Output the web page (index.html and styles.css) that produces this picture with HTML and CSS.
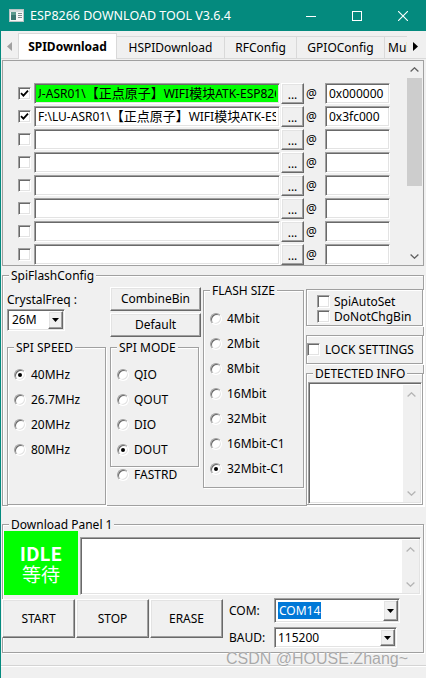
FILE: index.html
```html
<!DOCTYPE html>
<html lang="zh">
<head>
<meta charset="utf-8">
<title>ESP8266 DOWNLOAD TOOL V3.6.4</title>
<link rel="stylesheet" href="styles.css">
</head>
<body>
<div class="win">
  <header class="title">
    <svg class="appicon" width="15" height="13" viewBox="0 0 15 13">
      <rect x="0.5" y="0.5" width="14" height="12" fill="#f6f6f6" stroke="#b8c4c4"/>
      <rect x="1" y="1" width="13" height="2" fill="#d6dcdc"/>
      <rect x="2" y="3" width="5" height="8" fill="#3b7670"/>
      <rect x="2" y="3" width="5" height="3" fill="#5d9a8e"/>
      <rect x="9" y="4" width="4" height="1" fill="#7d8d8d"/>
      <rect x="9" y="6" width="4" height="1" fill="#7d8d8d"/>
      <rect x="9" y="8" width="4" height="1" fill="#7d8d8d"/>
    </svg>
    <span class="ttext">ESP8266 DOWNLOAD TOOL V3.6.4</span>
    <div class="caps">
      <span class="cap"><svg width="10" height="10" viewBox="0 0 10 10"><rect x="0" y="5" width="10" height="1" fill="#fff"/></svg></span>
      <span class="cap"><svg width="10" height="10" viewBox="0 0 10 10"><rect x="0.5" y="0.5" width="9" height="9" fill="none" stroke="#fff"/></svg></span>
      <span class="cap"><svg width="10" height="10" viewBox="0 0 10 10"><path d="M0 0L10 10M10 0L0 10" stroke="#fff" stroke-width="1.1"/></svg></span>
    </div>
  </header>

  <nav class="tabs">
    <span class="tarr"><svg width="5" height="9" viewBox="0 0 5 9"><path d="M5 0L0 4.5L5 9Z" fill="#a0a0a0"/></svg></span>
    <span class="tab sel t1">SPIDownload</span>
    <span class="tab t2">HSPIDownload</span>
    <span class="tab t3">RFConfig</span>
    <span class="tab t4">GPIOConfig</span>
    <span class="tab t5"><span>MultiDownload</span></span>
    <span class="tarr r"><svg width="5" height="9" viewBox="0 0 5 9"><path d="M0 0L5 4.5L0 9Z" fill="#000"/></svg></span>
  </nav>

  <section class="list">
    <div class="rows">
      <div class="row">
        <span class="ck on"><svg width="9" height="9" viewBox="0 0 9 9"><path d="M1 4.2L3.4 6.6L8 1.6" fill="none" stroke="#000" stroke-width="1.8"/></svg></span>
        <span class="tb path green"><span class="tbi"><span class="scrolled">F:\LU-ASR01\<span class="cjk">【正点原子】</span>WIFI<span class="cjk">模块</span>ATK-ESP8266</span></span></span>
        <span class="btn dots">...</span>
        <span class="at">@</span>
        <span class="tb addr"><span class="tbi">0x000000</span></span>
      </div>
      <div class="row">
        <span class="ck on"><svg width="9" height="9" viewBox="0 0 9 9"><path d="M1 4.2L3.4 6.6L8 1.6" fill="none" stroke="#000" stroke-width="1.8"/></svg></span>
        <span class="tb path"><span class="tbi">F:\LU-ASR01\<span class="cjk">【正点原子】</span>WIFI<span class="cjk">模块</span>ATK-ESP8266</span></span>
        <span class="btn dots">...</span>
        <span class="at">@</span>
        <span class="tb addr"><span class="tbi">0x3fc000</span></span>
      </div>
      <div class="row"><span class="ck"></span><span class="tb path"></span><span class="btn dots">...</span><span class="at">@</span><span class="tb addr"></span></div>
      <div class="row"><span class="ck"></span><span class="tb path"></span><span class="btn dots">...</span><span class="at">@</span><span class="tb addr"></span></div>
      <div class="row"><span class="ck"></span><span class="tb path"></span><span class="btn dots">...</span><span class="at">@</span><span class="tb addr"></span></div>
      <div class="row"><span class="ck"></span><span class="tb path"></span><span class="btn dots">...</span><span class="at">@</span><span class="tb addr"></span></div>
      <div class="row"><span class="ck"></span><span class="tb path"></span><span class="btn dots">...</span><span class="at">@</span><span class="tb addr"></span></div>
      <div class="row"><span class="ck"></span><span class="tb path"></span><span class="btn dots">...</span><span class="at">@</span><span class="tb addr"></span></div>
    </div>
    <div class="vs">
      <span class="sarr"><svg width="9" height="5" viewBox="0 0 9 5"><path d="M0.6 4.5L4.5 0.8L8.4 4.5" fill="none" stroke="#606060" stroke-width="1.3"/></svg></span>
      <span class="thumb"></span>
      <span class="strack"></span>
      <span class="sarr"><svg width="9" height="5" viewBox="0 0 9 5"><path d="M0.6 0.5L4.5 4.2L8.4 0.5" fill="none" stroke="#606060" stroke-width="1.3"/></svg></span>
    </div>
  </section>

  <section class="grp sfc">
    <span class="gl">SpiFlashConfig</span>
    <div class="cols">
      <div class="ca">
        <span class="cf">CrystalFreq :</span>
        <div class="tb combo c26"><span class="val">26M</span><span class="btn dd"><svg width="7" height="4" viewBox="0 0 7 4"><path d="M0 0H7L3.5 4Z" fill="#000"/></svg></span></div>
        <div class="grp speed">
          <span class="gl">SPI SPEED</span>
          <div class="rlist">
            <div class="rr"><span class="rd on"></span>40MHz</div>
            <div class="rr"><span class="rd"></span>26.7MHz</div>
            <div class="rr"><span class="rd"></span>20MHz</div>
            <div class="rr"><span class="rd"></span>80MHz</div>
          </div>
        </div>
      </div>
      <div class="cb">
        <span class="btn big first">CombineBin</span>
        <span class="btn big">Default</span>
        <div class="grp mode">
          <span class="gl">SPI MODE</span>
          <div class="rlist">
            <div class="rr"><span class="rd"></span>QIO</div>
            <div class="rr"><span class="rd"></span>QOUT</div>
            <div class="rr"><span class="rd"></span>DIO</div>
            <div class="rr"><span class="rd on"></span>DOUT</div>
          </div>
        </div>
        <div class="rr fast"><span class="rd"></span>FASTRD</div>
      </div>
      <div class="cc">
        <div class="grp flash">
          <span class="gl">FLASH SIZE</span>
          <div class="rlist fl">
            <div class="rr"><span class="rd"></span>4Mbit</div>
            <div class="rr"><span class="rd"></span>2Mbit</div>
            <div class="rr"><span class="rd"></span>8Mbit</div>
            <div class="rr"><span class="rd"></span>16Mbit</div>
            <div class="rr"><span class="rd"></span>32Mbit</div>
            <div class="rr"><span class="rd"></span>16Mbit-C1</div>
            <div class="rr"><span class="rd on"></span>32Mbit-C1</div>
          </div>
        </div>
      </div>
      <div class="cd">
        <div class="grp box1">
          <div class="ckrow"><span class="ck"></span>SpiAutoSet</div>
          <div class="ckrow"><span class="ck"></span>DoNotChgBin</div>
        </div>
        <div class="grp lock"><span class="ck"></span>LOCK SETTINGS</div>
        <div class="grp det">
          <span class="gl">DETECTED INFO</span>
          <div class="tb area det-area">
            <div class="ds">
              <svg width="9" height="5" viewBox="0 0 9 5"><path d="M0.6 4.5L4.5 0.8L8.4 4.5" fill="none" stroke="#b4b4b4" stroke-width="1.3"/></svg>
              <svg width="9" height="5" viewBox="0 0 9 5"><path d="M0.6 0.5L4.5 4.2L8.4 0.5" fill="none" stroke="#b4b4b4" stroke-width="1.3"/></svg>
            </div>
          </div>
        </div>
      </div>
    </div>
  </section>

  <section class="grp dp">
    <span class="gl">Download Panel 1</span>
    <div class="dtop">
      <div class="idle"><b>IDLE</b><span>等待</span></div>
      <div class="tb area log">
        <div class="ds">
          <svg width="9" height="5" viewBox="0 0 9 5"><path d="M0.6 4.5L4.5 0.8L8.4 4.5" fill="none" stroke="#b4b4b4" stroke-width="1.3"/></svg>
          <svg width="9" height="5" viewBox="0 0 9 5"><path d="M0.6 0.5L4.5 4.2L8.4 0.5" fill="none" stroke="#b4b4b4" stroke-width="1.3"/></svg>
        </div>
      </div>
    </div>
    <div class="dbot">
      <span class="btn dbtn first">START</span>
      <span class="btn dbtn">STOP</span>
      <span class="btn dbtn">ERASE</span>
      <div class="port">
        <div class="prow">
          <span class="plabel">COM:</span>
          <div class="tb combo com"><span class="val"><span class="hl">COM14</span></span><span class="btn dd"><svg width="7" height="4" viewBox="0 0 7 4"><path d="M0 0H7L3.5 4Z" fill="#000"/></svg></span></div>
        </div>
        <div class="prow p2">
          <span class="plabel">BAUD:</span>
          <div class="tb combo baud"><span class="val">115200</span><span class="btn dd"><svg width="7" height="4" viewBox="0 0 7 4"><path d="M0 0H7L3.5 4Z" fill="#000"/></svg></span></div>
        </div>
      </div>
    </div>
  </section>

  <div class="status"></div>
  <div class="wm">CSDN @HOUSE.Zhang~</div>
</div>
</body>
</html>
```

FILE: styles.css
```css
* { box-sizing: border-box; }
html, body { margin: 0; padding: 0; }
body {
  width: 426px; height: 678px; overflow: hidden;
  background: #f0f0f0;
  font-family: "Noto Sans", "Noto Sans CJK SC", sans-serif;
  font-size: 12px; line-height: 16px; color: #000;
}
.win {
  width: 426px; height: 678px; overflow: hidden; position: relative;
  border-left: 1px solid #048a7e; background: #f0f0f0;
}

/* title bar */
.title {
  height: 31px; background: #048a7e; color: #fff;
  display: flex; align-items: center; padding-left: 8px;
}
.appicon { display: block; flex: none; }
.ttext { margin-left: 6px; flex: 1; font-size: 12.5px; white-space: nowrap; }
.caps { display: flex; align-self: stretch; }
.cap { width: 46px; display: flex; align-items: center; justify-content: center; }
.cap svg { display: block; }

/* tabs */
.tabs {
  height: 28px; display: flex; align-items: flex-end;
  border-bottom: 1px solid #d9d9d9; white-space: nowrap;
}
.tarr {
  width: 17px; flex: none; align-self: stretch;
  display: flex; align-items: center; justify-content: center; padding-top: 3px;
}
.tarr svg { display: block; }
.tarr.r {
  width: 19px; justify-content: flex-start; padding-left: 6px;
  background: #f0f0f0; position: relative; z-index: 2;
}
.tab {
  flex: none; height: 22px; border: 1px solid #d9d9d9; border-bottom: 0;
  background: #f0f0f0; margin-left: -1px;
  display: flex; align-items: center; justify-content: center;
  overflow: hidden;
}
.tab.sel {
  height: 26px; margin-bottom: -1px; margin-left: 0; background: #fff;
  font-weight: bold; position: relative; z-index: 1;
}
.t1 { width: 99px; }
.t2 { width: 109px; }
.t3 { width: 73px; }
.t4 { width: 89px; }
.t5 { width: 23px; justify-content: flex-start; padding-left: 3px; border-right: 0; }

/* common widgets */
.tb {
  background: #fff; border: 1px solid; border-color: #a0a0a0 #fff #fff #a0a0a0;
  box-shadow: inset 1px 1px 0 #696969, inset -1px -1px 0 #e3e3e3;
}
.btn {
  background: #f0f0f0; border: 1px solid; border-color: #fff #696969 #696969 #fff;
  box-shadow: inset -1px -1px 0 #a0a0a0, inset 1px 1px 0 #e3e3e3;
  display: flex; align-items: center; justify-content: center; flex: none;
  white-space: nowrap;
}
.ck {
  width: 13px; height: 13px; flex: none; background: #fff;
  border: 1px solid; border-color: #a0a0a0 #fff #fff #a0a0a0;
  box-shadow: inset 1px 1px 0 #696969, inset -1px -1px 0 #e3e3e3;
  display: flex; align-items: center; justify-content: center;
}
.ck svg { display: block; }
.rd {
  width: 12px; height: 12px; flex: none; border-radius: 50%; background: #fff;
  border: 1px solid; border-color: #a0a0a0 #fff #fff #a0a0a0;
  box-shadow: inset 1px 1px 0 #696969, inset -1px -1px 0 #e3e3e3;
  position: relative; margin-right: 5px;
}
.rd.on::after {
  content: ""; position: absolute; left: 3px; top: 3px;
  width: 4px; height: 4px; border-radius: 50%; background: #000;
}
.grp {
  border: 1px solid #a0a0a0;
  box-shadow: inset 1px 1px 0 #fff, 1px 1px 0 #fff;
}
.gl {
  display: block; width: max-content; height: 15px; line-height: 15px;
  margin: -8px 0 0 6px; padding: 0 2px; background: #f0f0f0; white-space: nowrap;
}

/* file list */
.list {
  display: flex; margin: 1px 0 0 1px; width: 422px; height: 206px;
  border: 1px solid #a0a0a0;
}
.rows { flex: 1; padding: 22px 0 0 15px; overflow: hidden; }
.row { display: flex; align-items: center; height: 21px; margin-bottom: 2px; }
.row .tb { height: 21px; display: flex; align-items: center; padding: 0 3px; }
.path { width: 246px; margin-left: 3px; }
.tbi { flex: 1; overflow: hidden; white-space: nowrap; }
.cjk { font-family: "Noto Sans CJK SC", sans-serif; font-size: 13px; }
.green { background: #00ff00; }
.scrolled { display: inline-block; margin-left: -25px; }
.dots { width: 23px; height: 21px; margin-left: 1px; padding-top: 3px; }
.at { margin-left: 2px; width: 12px; flex: none; }
.addr { width: 65px; margin-left: 7px; }
.vs { width: 17px; flex: none; display: flex; flex-direction: column; }
.sarr { height: 17px; display: flex; align-items: center; justify-content: center; }
.sarr svg { display: block; }
.thumb { height: 108px; background: #cdcdcd; margin: 0 1px; }
.strack { flex: 1; }

/* SpiFlashConfig */
.sfc {
  margin: 9px 0 0 1px; width: 422px; height: 231px;
  display: flex; flex-direction: column;
}
.cols { flex: 1; display: flex; padding-left: 4px; min-height: 0; }
.ca { width: 99px; flex: none; display: flex; flex-direction: column; }
.cf { margin-top: 9px; height: 16px; white-space: nowrap; }
.combo { display: flex; align-items: center; padding-left: 4px; }
.combo .val { flex: 1; white-space: nowrap; }
.dd { width: 15px; align-self: stretch; margin: 1px 1px 1px 0; }
.dd svg { display: block; }
.c26 { margin-top: 1px; width: 58px; height: 22px; }
.speed { margin-top: 16px; flex: 1; }
.rlist { margin-top: 7px; }
.rlist.fl { margin-top: 8px; }
.rr { display: flex; align-items: center; height: 25px; padding-left: 6px; white-space: nowrap; }
.cb { width: 91px; flex: none; margin-left: 4px; display: flex; flex-direction: column; }
.big { height: 24px; margin-top: 2px; }
.big.first { margin-top: 4px; }
.mode { margin-top: 10px; height: 120px; width: 89px; }
.rr.fast { height: 16px; padding-left: 7px; }
.cc { width: 101px; flex: none; margin-left: 2px; }
.flash { margin-top: 7px; height: 198px; }
.cd { width: 117px; flex: none; margin-left: 2px; display: flex; flex-direction: column; }
.box1 { margin-top: 6px; height: 37px; padding: 4px 0 0 10px; }
.ckrow { display: flex; align-items: center; height: 15px; white-space: nowrap; }
.ckrow .ck { margin-right: 4px; }
.lock { margin-top: 9px; height: 29px; display: flex; align-items: center; white-space: nowrap; }
.lock .ck { margin-right: 5px; }
.det { margin-top: 9px; flex: 1; display: flex; flex-direction: column; min-height: 0; }
.area { display: flex; justify-content: flex-end; }
.det-area { margin: 1px 0 0 1px; width: 114px; flex: 1; }
.ds {
  width: 17px; background: #f0f0f0; margin: 2px 1px 1px 0;
  display: flex; flex-direction: column; align-items: center; justify-content: space-between;
  padding: 7px 0 6px;
}
.ds svg { display: block; }

/* download panel */
.dp { margin: 18px 0 0 1px; width: 422px; height: 129px; }
.dtop { display: flex; margin-top: -1px; height: 64px; }
.idle {
  width: 74px; flex: none; margin-left: 1px; background: #00ff00; color: #fff;
  display: flex; flex-direction: column; align-items: center; justify-content: center;
  font-family: "Noto Sans CJK SC", "Noto Sans", sans-serif; font-size: 19px; line-height: 21px;
}
.idle b { font-weight: bold; }
.log { margin: 6px 0 0 2px; width: 341px; height: 58px; }
.dbot { display: flex; margin-top: 4px; height: 39px; }
.dbtn { width: 73px; height: 39px; margin-left: 1px; }
.dbtn.first { margin-left: -1px; }
.port { margin: -1px 0 0 6px; display: flex; flex-direction: column; }
.prow { display: flex; align-items: center; }
.prow.p2 { margin-top: 4px; }
.plabel { width: 45px; flex: none; }
.com { width: 126px; height: 25px; padding-left: 3px; }
.baud { width: 123px; height: 21px; padding-left: 3px; }
.hl { background: #0078d7; color: #fff; padding: 0 1px; }

.status {
  margin-top: 12px; height: 2px;
  border-top: 1px solid #d4d4d4; border-bottom: 1px solid #fff;
}
.wm {
  position: absolute; left: 225px; top: 650px;
  font-family: "Liberation Sans", Arial, sans-serif; font-size: 16px; line-height: 18px;
  color: #a9a9a9; text-shadow: 0 0 1px #fff; white-space: nowrap;
}
```
